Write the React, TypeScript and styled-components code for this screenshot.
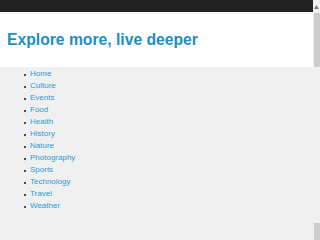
import * as React from 'react';
import styled, { createGlobalStyle } from 'styled-components';

const GlobalStyle = createGlobalStyle`
  html, body {
    margin: 0;
    padding: 0;
    height: 100%;
    overflow: hidden;
    background: #f0f0f0;
    font-family: 'Liberation Sans', Arial, sans-serif;
  }
`;

const Page = styled.div`
  display: flex;
  width: 320px;
  height: 240px;
`;

const Main = styled.div`
  display: flex;
  flex-flow: column;
  flex: 1;
  min-width: 0;
`;

const TopBar = styled.div`
  height: 12px;
  background-color: #222222;
  flex-shrink: 0;
`;

const Header = styled.header`
  display: flex;
  align-items: center;
  height: 55px;
  padding: 0 7px;
  background-color: #ffffff;
  flex-shrink: 0;
`;

const Title = styled.h1`
  margin: 1px 0 0 0;
  font-size: 15.7px;
  font-weight: bold;
  color: #1b8ec6;
  white-space: nowrap;
`;

const Menu = styled.ul`
  margin: 0;
  padding: 1px 0 0 24px;
  list-style: none;
`;

const MenuItem = styled.li`
  display: flex;
  align-items: baseline;
  height: 12px;
  line-height: 12px;
  font-size: 8px;

  &::before {
    content: '';
    width: 2px;
    height: 2px;
    margin-right: 4px;
    background: #4a4a4a;
    flex-shrink: 0;
  }
`;

const MenuLink = styled.a`
  color: #2e9ad0;
  text-decoration: none;
`;

interface ThumbProps {
  size: number;
}

const Scrollbar = styled.div`
  display: flex;
  flex-flow: column;
  width: 7px;
  flex-shrink: 0;
  background: #f0f0f0;
`;

const Arrow = styled.div`
  height: 13px;
  display: flex;
  align-items: center;
  justify-content: center;
`;

const Thumb = styled.div`
  width: 6px;
  margin-left: 1px;
  height: ${({ size }: ThumbProps) => size}px;
  background: #cdcdcd;
  flex-shrink: 0;
`;

const Track = styled.div`
  flex: 1;
`;

const items = [
  'Home',
  'Culture',
  'Events',
  'Food',
  'Health',
  'History',
  'Nature',
  'Photography',
  'Sports',
  'Technology',
  'Travel',
  'Weather',
];

export default function App() {
  return (
    <Page>
      <GlobalStyle />
      <Main>
        <TopBar />
        <Header>
          <Title>Explore more, live deeper</Title>
        </Header>
        <nav>
          <Menu>
            {items.map(item => (
              <MenuItem key={item}>
                <MenuLink href="#">{item}</MenuLink>
              </MenuItem>
            ))}
          </Menu>
        </nav>
      </Main>
      <Scrollbar>
        <Arrow>
          <svg width="5" height="4" viewBox="0 0 5 4">
            <path d="M0 4 L2.5 0 L5 4 Z" fill="#7a7a7a" />
          </svg>
        </Arrow>
        <Thumb size={54} />
        <Track />
        <Thumb size={17} />
      </Scrollbar>
    </Page>
  );
}
